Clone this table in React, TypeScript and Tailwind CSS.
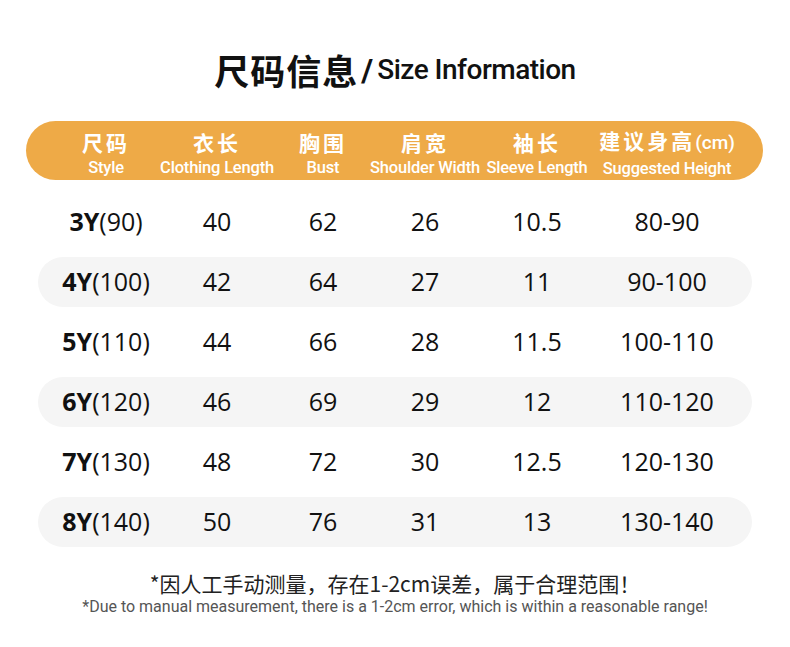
import React from "react";

const cols = "grid grid-cols-[120px_102px_110px_94px_130px_130px]";

const headers = [
  { zh: "尺码", en: "Style" },
  { zh: "衣长", en: "Clothing Length" },
  { zh: "胸围", en: "Bust" },
  { zh: "肩宽", en: "Shoulder Width" },
  { zh: "袖长", en: "Sleeve Length" },
  { zh: "建议身高", en: "Suggested Height", unit: "(cm)" },
];

const rows = [
  ["3Y", "(90)", "40", "62", "26", "10.5", "80-90"],
  ["4Y", "(100)", "42", "64", "27", "11", "90-100"],
  ["5Y", "(110)", "44", "66", "28", "11.5", "100-110"],
  ["6Y", "(120)", "46", "69", "29", "12", "110-120"],
  ["7Y", "(130)", "48", "72", "30", "12.5", "120-130"],
  ["8Y", "(140)", "50", "76", "31", "13", "130-140"],
];

const cjk = "font-['Noto_Sans_CJK_SC',sans-serif]";
const narrow = "font-['Roboto',sans-serif]";

export default function App() {
  return (
    <div className="h-[647px] w-[790px] bg-white text-[#111]">
      <div className="flex h-[121px] items-center justify-center pb-[2px] pt-[20px]">
        <span className={`${cjk} text-[35px] font-bold leading-none tracking-[1px]`}>尺码信息</span>
        <span className={`${narrow} ml-[3px] text-[32px] font-bold leading-none`}>/</span>
        <span className={`${narrow} ml-[4px] text-[28px] font-medium leading-none tracking-[-0.5px]`}>
          Size Information
        </span>
      </div>

      <div
        className={`${cols} ml-[26px] h-[59px] w-[737px] items-center rounded-full bg-[#eeaa47] pl-[20px] pt-[6px] text-white`}
      >
        {headers.map((h) => (
          <div key={h.en} className="flex flex-col items-center whitespace-nowrap">
            <div className={`${cjk} text-[21px] font-bold leading-[26px] tracking-[3px]`}>
              {h.zh}
              {h.unit && <span className={`${narrow} text-[19px] font-medium tracking-normal`}>{h.unit}</span>}
            </div>
            <div className={`${narrow} text-[16.5px] font-medium leading-[26px] tracking-[-0.2px]`}>{h.en}</div>
          </div>
        ))}
      </div>

      <div className="mt-[17px] flex flex-col gap-[10px]">
        {rows.map((r, i) => (
          <div
            key={r[0]}
            className={`${cols} ml-[38px] h-[50px] w-[714px] items-center rounded-full pl-[8px] font-['Open_Sans',sans-serif] text-[25px] ${
              i % 2 === 1 ? "bg-[#f5f5f5]" : ""
            }`}
          >
            <div className="text-center whitespace-nowrap">
              <span className="font-bold">{r[0]}</span>
              <span>{r[1]}</span>
            </div>
            {r.slice(2).map((v, j) => (
              <div key={j} className="text-center">
                {v}
              </div>
            ))}
          </div>
        ))}
      </div>

      <div className="mt-[22px] flex flex-col items-center">
        <div className={`${cjk} text-[21px] leading-[28px] text-[#222]`}>*因人工手动测量，存在1-2cm误差，属于合理范围！</div>
        <div className="font-['Roboto',sans-serif] text-[16px] leading-[20px] text-[#555]">
          *Due to manual measurement, there is a 1-2cm error, which is within a reasonable range!
        </div>
      </div>
    </div>
  );
}
